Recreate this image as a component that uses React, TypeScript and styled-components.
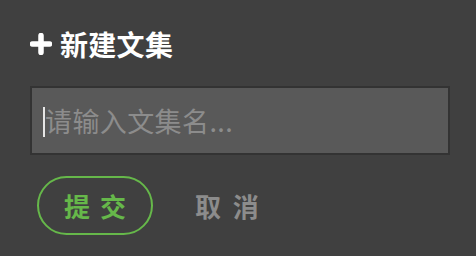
import React from "react";
import styled, { createGlobalStyle } from "styled-components";

const GlobalStyle = createGlobalStyle`
  html, body {
    margin: 0;
    padding: 0;
    background: #404040;
  }
  body {
    font-family: "Noto Sans CJK SC", "Noto Sans", sans-serif;
  }
`;

const Panel = styled.div`
  width: 476px;
  height: 256px;
  box-sizing: border-box;
  padding: 26px 26px 0 30px;
  display: flex;
  flex-direction: column;
  background: #404040;
`;

const Title = styled.div`
  display: flex;
  align-items: center;
  gap: 8px;
  height: 36px;
  color: #ffffff;
  font-size: 28px;
  font-weight: 700;
  line-height: 36px;
  letter-spacing: 0.3px;
`;

const PlusIcon = () => (
  <svg width="22" height="22" viewBox="0 0 22 22">
    <path d="M11 2.5v17M2.5 11h17" stroke="#fff" strokeWidth="5.5" strokeLinecap="round" />
  </svg>
);

const Field = styled.div`
  position: relative;
  margin-top: 24px;
  width: 420px;
  height: 69px;
`;

const NameInput = styled.input`
  width: 100%;
  height: 100%;
  box-sizing: border-box;
  border: 2px solid #333333;
  background: #595959;
  padding: 0 12px 0 13px;
  color: #ffffff;
  font-family: inherit;
  font-size: 27px;
  letter-spacing: 0.4px;
  outline: none;

  &::placeholder {
    color: #8c8c8c;
  }
`;

const Caret = styled.span`
  position: absolute;
  left: 13px;
  top: 21px;
  width: 2px;
  height: 30px;
  background: #e6e6e6;
  pointer-events: none;
`;

const Actions = styled.div`
  margin-top: 21px;
  display: flex;
  align-items: center;
  gap: 42px;
`;

const ActionButton = styled.button<{ $primary?: boolean }>`
  height: 59px;
  box-sizing: border-box;
  padding: ${(p) => (p.$primary ? "0 23px 0 25px" : "0")};
  margin-left: ${(p) => (p.$primary ? "7px" : "0")};
  border-radius: 30px;
  border: ${(p) => (p.$primary ? "2px solid #66b84a" : "none")};
  background: transparent;
  color: ${(p) => (p.$primary ? "#66b84a" : "#8c8c8c")};
  font-family: inherit;
  font-size: 26px;
  font-weight: 700;
  letter-spacing: ${(p) => (p.$primary ? "2px" : "3px")};
  cursor: pointer;
`;

export default function App() {
  return (
    <>
      <GlobalStyle />
      <Panel>
        <Title>
          <PlusIcon />
          新建文集
        </Title>
        <Field>
          <NameInput placeholder="请输入文集名..." />
          <Caret />
        </Field>
        <Actions>
          <ActionButton $primary>提 交</ActionButton>
          <ActionButton>取 消</ActionButton>
        </Actions>
      </Panel>
    </>
  );
}
